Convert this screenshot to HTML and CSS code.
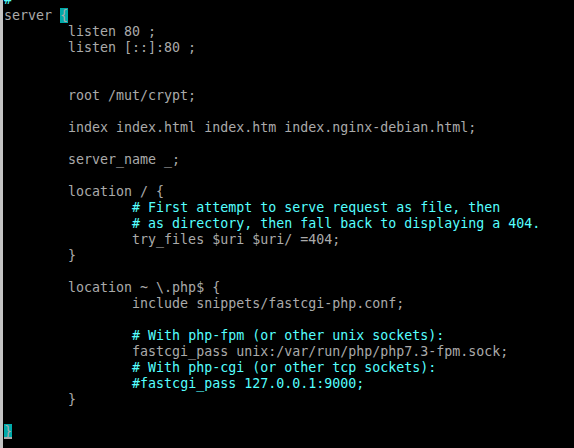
FILE: index.html
```html
<!DOCTYPE html>
<html>
<head>
<meta charset="utf-8">
<link rel="stylesheet" href="styles.css">
</head>
<body>
<div class="term">
<pre class="buf"><span class="c">#</span>
server <span class="hl">{</span>
        listen 80 ;
        listen [::]:80 ;


        root /mut/crypt;

        index index.html index.htm index.nginx-debian.html;

        server_name _;

        location / {
                <span class="c"># First attempt to serve request as file, then</span>
                <span class="c"># as directory, then fall back to displaying a 404.</span>
                try_files $uri $uri/ =404;
        }

        location ~ \.php$ {
                include snippets/fastcgi-php.conf;

                <span class="c"># With php-fpm (or other unix sockets):</span>
                fastcgi_pass unix:/var/run/php/php7.3-fpm.sock;
                <span class="c"># With php-cgi (or other tcp sockets):</span>
                <span class="c">#fastcgi_pass 127.0.0.1:9000;</span>
        }

<span class="cur">}</span></pre>
</div>
</body>
</html>
```
FILE: styles.css
```css
html, body {
  margin: 0;
  padding: 0;
  background: #000;
  height: 448px;
  overflow: hidden;
}
.term {
  height: 448px;
  border-left: 3px solid #c4c4c4;
  padding-left: 1px;
  overflow: hidden;
  background: #000;
}
.buf {
  margin: -8px 0 0 0;
  font-family: "DejaVu Sans Mono", "Liberation Mono", monospace;
  font-size: 13.3px;
  line-height: 16px;
  color: #aaaaaa;
  white-space: pre;
}
.c {
  color: #55ffff;
}
.hl {
  background: #00aaaa;
  color: #aaaaaa;
}
.cur {
  background: #00aaaa;
  color: #aaaaaa;
  box-shadow: inset 0 -2px 0 #aaaaaa;
}
```
